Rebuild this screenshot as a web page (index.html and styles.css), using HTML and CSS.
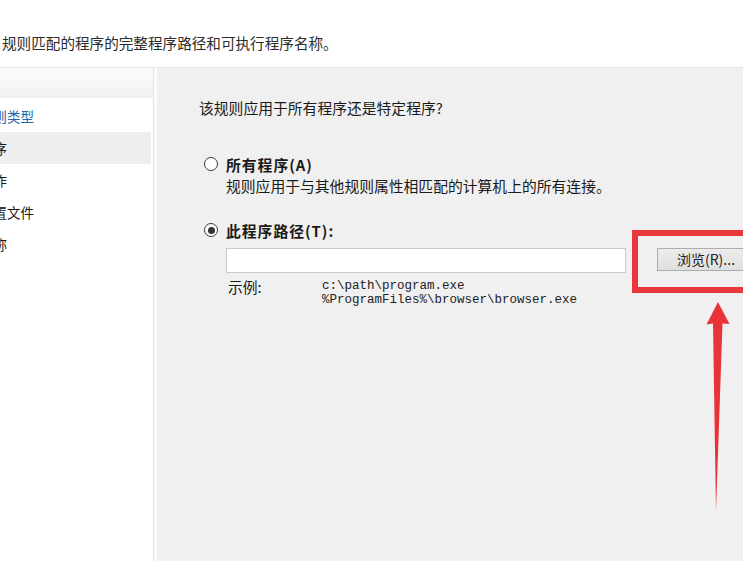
FILE: index.html
```html
<!DOCTYPE html>
<html lang="zh-CN">
<head>
<meta charset="utf-8">
<title>新建入站规则向导 - 程序</title>
<link rel="stylesheet" href="styles.css">
</head>
<body>
<div class="page">
  <div class="top">
    <p class="intro">规则匹配的程序的完整程序路径和可执行程序名称。</p>
  </div>
  <div class="main">
    <nav class="steps">
      <div class="steps-head"></div>
      <ul class="step-list">
        <li class="step done">规则类型</li>
        <li class="step current">程序</li>
        <li class="step">操作</li>
        <li class="step">配置文件</li>
        <li class="step">名称</li>
      </ul>
    </nav>
    <div class="gap"></div>
    <section class="content">
      <p class="question">该规则应用于所有程序还是特定程序?</p>
      <div class="option first">
        <span class="radio"></span>
        <span class="opt-label">所有程序(A)</span>
      </div>
      <p class="desc">规则应用于与其他规则属性相匹配的计算机上的所有连接。</p>
      <div class="option second">
        <span class="radio checked"></span>
        <span class="opt-label">此程序路径(T):</span>
      </div>
      <div class="path-row">
        <div class="path-input"></div>
        <div class="browse">浏览(R)...</div>
      </div>
      <div class="example">
        <span class="ex-label">示例:</span>
        <span class="ex-code">c:\path\program.exe<br>%ProgramFiles%\browser\browser.exe</span>
      </div>
    </section>
  </div>
  <div class="highlight-box"></div>
  <svg class="arrow" viewBox="700 295 40 225" width="40" height="225">
    <path d="M718 302 L729.5 324 L722.5 323.5 L716 511 L713 323.5 L706.5 324.5 Z" fill="#ea3339"/>
  </svg>
</div>
</body>
</html>
```
FILE: styles.css
```css
* { box-sizing: border-box; }
html, body { margin: 0; padding: 0; }
body {
  width: 743px;
  height: 561px;
  overflow: hidden;
  background: #ffffff;
  font-family: "Noto Sans CJK SC", "Noto Sans", sans-serif;
  color: #1a1a1a;
}
.page {
  position: relative;
  width: 743px;
  height: 561px;
  overflow: hidden;
  display: flex;
  flex-direction: column;
}
.top {
  height: 68px;
  flex: none;
  border-bottom: 1px solid #e6e6e6;
  background: #fff;
  overflow: hidden;
}
.intro {
  margin: 0;
  padding: 33px 0 0 2px;
  font-size: 14.6px;
  line-height: 20px;
  white-space: nowrap;
  color: #2b2b2b;
}
.main {
  flex: 1;
  display: flex;
  min-height: 0;
}
.steps {
  width: 154px;
  flex: none;
  background: #fff;
  border-right: 1px solid #e3e3e3;
  overflow: hidden;
}
.steps-head {
  height: 30px;
  background: linear-gradient(#fbfbfb, #f2f2f2);
  border-bottom: 1px solid #f0f0f0;
}
.step-list {
  list-style: none;
  margin: 2px 0 0 0;
  padding: 0;
}
.step {
  height: 32px;
  line-height: 32px;
  font-size: 13.5px;
  margin-left: -20px;
  margin-right: 2px;
  padding-left: 0;
  white-space: nowrap;
  color: #1a1a1a;
}
.step.done { color: #2463a8; }
.step.current { background: #efefef; }
.gap {
  width: 3px;
  flex: none;
  background: #fff;
}
.content {
  flex: 1;
  background: #f0f0f0;
  padding: 30px 0 0 42px;
  overflow: hidden;
  min-width: 0;
}
.question {
  margin: 0;
  font-size: 14.8px;
  line-height: 20px;
  white-space: nowrap;
}
.option {
  display: flex;
  align-items: center;
  height: 20px;
  margin-left: 5px;
  white-space: nowrap;
}
.option.first { margin-top: 36px; }
.option.second { margin-top: 24px; }
.radio {
  width: 14px;
  height: 14px;
  border: 1.5px solid #3a3a3a;
  border-radius: 50%;
  background: #fff;
  display: flex;
  align-items: center;
  justify-content: center;
  flex: none;
}
.radio.checked::after {
  content: "";
  width: 7px;
  height: 7px;
  border-radius: 50%;
  background: #333;
}
.opt-label {
  margin-left: 8px;
  font-size: 14.8px;
  font-weight: 700;
  letter-spacing: 1px;
}
.desc {
  margin: 2px 0 0 27px;
  font-size: 14.8px;
  line-height: 20px;
  white-space: nowrap;
}
.path-row {
  display: flex;
  align-items: flex-start;
  margin: 8px 0 0 27px;
}
.path-input {
  width: 400px;
  height: 25px;
  flex: none;
  background: #fff;
  border: 1px solid #c9c9c9;
}
.browse {
  margin-left: 31px;
  width: 110px;
  height: 23px;
  flex: none;
  border: 1px solid #adadad;
  background: linear-gradient(#ececec, #e0e0e0);
  font-size: 14px;
  line-height: 21px;
  padding-left: 19px;
  white-space: nowrap;
  color: #222;
}
.example {
  display: flex;
  margin: 6px 0 0 29px;
  white-space: nowrap;
}
.ex-label {
  width: 94px;
  flex: none;
  font-size: 14.8px;
  line-height: 16px;
}
.ex-code {
  font-family: "Liberation Mono", monospace;
  font-size: 12.5px;
  line-height: 14px;
  color: #222;
}
.highlight-box {
  position: absolute;
  left: 632px;
  top: 230px;
  width: 130px;
  height: 63px;
  border: 6px solid #e8383c;
}
.arrow {
  position: absolute;
  left: 700px;
  top: 295px;
}
```
